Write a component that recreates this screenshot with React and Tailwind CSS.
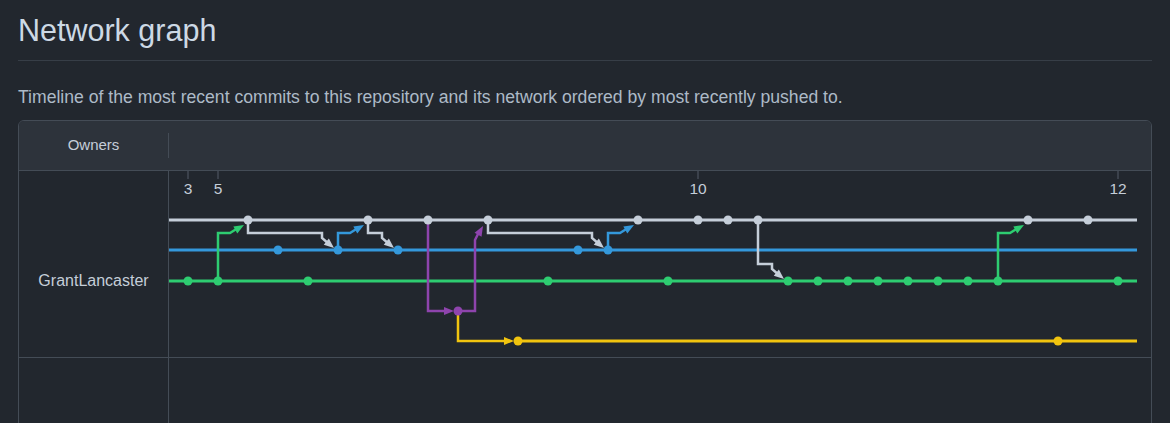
const WHITE = "#c5ced9";
const BLUE = "#3498db";
const GREEN = "#2ecc71";
const PURPLE = "#8e44ad";
const YELLOW = "#f1c40f";

const Y = { white: 220, blue: 250, green: 281, purple: 311, yellow: 341 };

const lanes = [
  { color: WHITE, y: Y.white, from: 169, dots: [248, 368, 428, 488, 638, 698, 728, 758, 1028, 1088] },
  { color: BLUE, y: Y.blue, from: 169, dots: [278, 338, 398, 578, 608] },
  { color: GREEN, y: Y.green, from: 169, dots: [188, 218, 308, 548, 668, 788, 818, 848, 878, 908, 938, 968, 998, 1118] },
  { color: YELLOW, y: Y.yellow, from: 518, dots: [518, 1058] },
];

const ticks = [
  { x: 188, label: "3" },
  { x: 218, label: "5" },
  { x: 698, label: "10" },
  { x: 1118, label: "12" },
];

// merges from a lower lane up into a higher one
const ups = [
  { color: GREEN, sx: 218, sy: Y.green, tx: 248, ty: Y.white },
  { color: BLUE, sx: 338, sy: Y.blue, tx: 368, ty: Y.white },
  { color: BLUE, sx: 608, sy: Y.blue, tx: 638, ty: Y.white },
  { color: GREEN, sx: 998, sy: Y.green, tx: 1028, ty: Y.white },
];

// branches from a higher lane down into a lower one
const downs = [
  { color: WHITE, sx: 248, sy: Y.white, tx: 338, ty: Y.blue },
  { color: WHITE, sx: 368, sy: Y.white, tx: 398, ty: Y.blue },
  { color: WHITE, sx: 488, sy: Y.white, tx: 608, ty: Y.blue },
  { color: WHITE, sx: 758, sy: Y.white, tx: 788, ty: Y.green },
];

function Head({ x1, y1, x2, y2, color, len = 10, half = 4 }) {
  const dx = x2 - x1;
  const dy = y2 - y1;
  const d = Math.hypot(dx, dy);
  const ux = dx / d;
  const uy = dy / d;
  const bx = x2 - ux * len;
  const by = y2 - uy * len;
  const pts = `${x2},${y2} ${bx - uy * half},${by + ux * half} ${bx + uy * half},${by - ux * half}`;
  return <polygon points={pts} fill={color} />;
}

function Graph() {
  return (
    <svg width="969" height="186" viewBox="169 171 969 186" className="block shrink-0">
      {ticks.map(t => (
        <g key={t.x}>
          <line x1={t.x} y1={171} x2={t.x} y2={179} stroke="#545d68" strokeWidth="1" />
          <text x={t.x} y={194} textAnchor="middle" fontSize="15.5" fill="#c5ced9" fontFamily="Liberation Sans, Arial, sans-serif">
            {t.label}
          </text>
        </g>
      ))}

      {lanes.map(l => (
        <line key={l.y} x1={l.from} y1={l.y} x2={1137} y2={l.y} stroke={l.color} strokeWidth="3" />
      ))}

      {/* purple branch */}
      <path d={`M428,${Y.white} V${Y.purple} H448`} fill="none" stroke={PURPLE} strokeWidth="2.5" />
      <Head x1={440} y1={Y.purple} x2={454} y2={Y.purple} color={PURPLE} />
      <path d={`M458,${Y.purple} H475 V240 L479,232`} fill="none" stroke={PURPLE} strokeWidth="2.5" />
      <Head x1={475} y1={240} x2={483} y2={226} color={PURPLE} />
      {/* yellow branch */}
      <path d={`M458,${Y.purple} V${Y.yellow} H508`} fill="none" stroke={YELLOW} strokeWidth="2.5" />
      <Head x1={500} y1={Y.yellow} x2={514} y2={Y.yellow} color={YELLOW} />

      {ups.map(m => (
        <g key={`u${m.sx}`}>
          <path d={`M${m.sx},${m.sy} V${m.ty + 13} H${m.sx + 12} L${m.tx - 10},${m.ty + 8}`} fill="none" stroke={m.color} strokeWidth="2.5" />
          <Head x1={m.sx + 12} y1={m.ty + 13} x2={m.tx - 4} y2={m.ty + 5} color={m.color} />
        </g>
      ))}

      {downs.map(m => (
        <g key={`d${m.sx}`}>
          <path
            d={`M${m.sx},${m.sy} V${m.ty - 17} H${m.tx - 16} V${m.ty - 12} L${m.tx - 9},${m.ty - 6}`}
            fill="none"
            stroke={m.color}
            strokeWidth="2.5"
          />
          <Head x1={m.tx - 16} y1={m.ty - 12} x2={m.tx - 4} y2={m.ty - 2} color={m.color} />
        </g>
      ))}

      {lanes.map(l =>
        l.dots.map(x => <circle key={`${l.y}-${x}`} cx={x} cy={l.y} r="4.5" fill={l.color} />)
      )}
      <circle cx={458} cy={Y.purple} r="4.5" fill={PURPLE} />
    </svg>
  );
}

export default function App() {
  return (
    <div className="min-h-screen bg-[#22272e] px-[18px] text-[#adbac7]" style={{ fontFamily: "'Liberation Sans', Arial, sans-serif" }}>
      <div className="pt-[11px] pb-[11px] border-b border-[#373e47]">
        <h2 className="text-[30.5px] leading-[38px] font-normal text-[#cdd9e5]">Network graph</h2>
      </div>

      <p className="mt-[24px] mb-[11px] text-[17.6px] leading-[24px] text-[#adbac7]">
        Timeline of the most recent commits to this repository and its network ordered by most recently pushed to.
      </p>

      <div className="border border-[#444c56] rounded-t-md overflow-hidden">
        <div className="flex h-[50px] bg-[#2d333b] border-b border-[#444c56] items-center">
          <div className="w-[150px] h-[25px] border-r border-[#444c56] flex items-center justify-center text-[15px] text-[#c5ced9]">
            Owners
          </div>
        </div>

        <div className="flex border-b border-[#444c56]">
          <div className="w-[150px] shrink-0 border-r border-[#444c56] pt-[100px] text-center text-[16px] leading-[20px] text-[#c5ced9]">
            GrantLancaster
          </div>
          <Graph />
        </div>

        <div className="flex h-[120px]">
          <div className="w-[150px] shrink-0 border-r border-[#444c56]" />
          <div className="flex-1" />
        </div>
      </div>
    </div>
  );
}
